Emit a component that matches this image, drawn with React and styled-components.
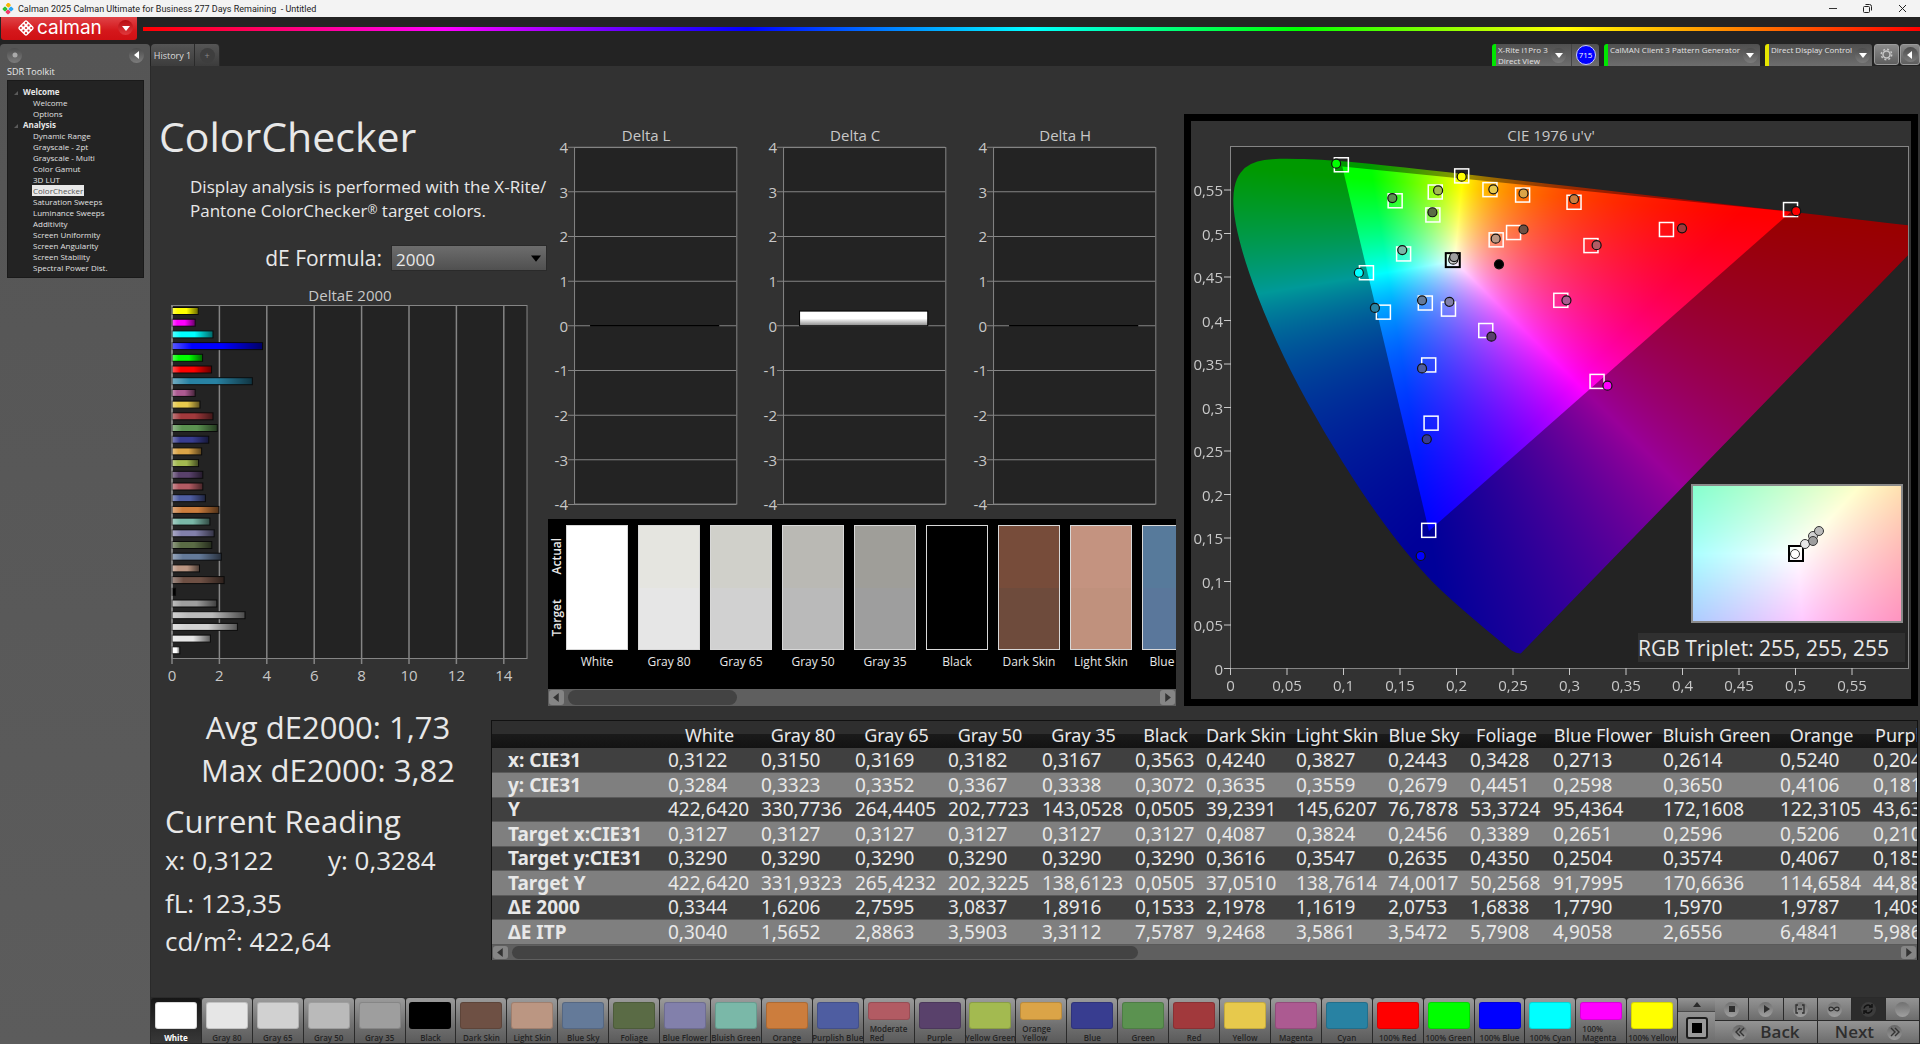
import React, { useEffect, useRef } from 'react';
import styled, { createGlobalStyle, css } from 'styled-components';

const colours = {
  page: '#323232',
  dark: '#232323',
  line: '#858585',
  text: '#e8e8e8',
  axis: '#c8c8c8',
};

const uiFont = `'Open Sans', 'Noto Sans', sans-serif`;
const tableFont = `'Noto Sans', 'Open Sans', sans-serif`;

const patches = [
  { name: 'White', colour: '#ffffff', actual: '#ffffff', dE: 0.33 },
  { name: 'Gray 80', colour: '#e6e6e6', actual: '#e5e5e0', dE: 1.62 },
  { name: 'Gray 65', colour: '#d1d1d1', actual: '#d0d0ca', dE: 2.76 },
  { name: 'Gray 50', colour: '#bababa', actual: '#bab9b4', dE: 3.08 },
  { name: 'Gray 35', colour: '#9e9e9e', actual: '#9f9e99', dE: 1.89 },
  { name: 'Black', colour: '#000000', actual: '#000000', dE: 0.15 },
  { name: 'Dark Skin', colour: '#6e5044', target: '#6e4b3c', actual: '#774c3a', dE: 2.2 },
  { name: 'Light Skin', colour: '#bb9682', target: '#c0917d', actual: '#c49380', dE: 1.16 },
  { name: 'Blue Sky', colour: '#647a99', target: '#5a779b', actual: '#577a9b', dE: 2.08 },
  { name: 'Foliage', colour: '#5a6b45', dE: 1.68 },
  { name: 'Blue Flower', colour: '#8280ab', dE: 1.78 },
  { name: 'Bluish Green', colour: '#7ab8a8', dE: 1.6 },
  { name: 'Orange', colour: '#cc7d3d', dE: 1.98 },
  { name: 'Purplish Blue', colour: '#4e5da1', dE: 1.41 },
  { name: 'Moderate Red', colour: '#b25b63', dE: 1.3, tall: true },
  { name: 'Purple', colour: '#59416b', dE: 1.3 },
  { name: 'Yellow Green', colour: '#a3ba50', dE: 1.12 },
  { name: 'Orange Yellow', colour: '#dba447', dE: 1.25, tall: true },
  { name: 'Blue', colour: '#383d90', dE: 1.55 },
  { name: 'Green', colour: '#5b9250', dE: 1.91 },
  { name: 'Red', colour: '#a1393c', dE: 1.73 },
  { name: 'Yellow', colour: '#e7c94c', dE: 1.18 },
  { name: 'Magenta', colour: '#ac5a91', dE: 0.98 },
  { name: 'Cyan', colour: '#2882a3', dE: 3.39 },
  { name: '100% Red', colour: '#ff0000', dE: 1.67 },
  { name: '100% Green', colour: '#00ff00', dE: 1.29 },
  { name: '100% Blue', colour: '#0000ff', dE: 3.82 },
  { name: '100% Cyan', colour: '#00ffff', dE: 1.73 },
  { name: '100% Magenta', colour: '#ff00ff', dE: 0.98, tall: true },
  { name: '100% Yellow', colour: '#ffff00', dE: 1.11 },
];

const tree = [
  { name: 'Welcome', items: ['Welcome', 'Options'] },
  {
    name: 'Analysis',
    items: [
      'Dynamic Range',
      'Grayscale - 2pt',
      'Grayscale - Multi',
      'Color Gamut',
      '3D LUT',
      'ColorChecker',
      'Saturation Sweeps',
      'Luminance Sweeps',
      'Additivity',
      'Screen Uniformity',
      'Screen Angularity',
      'Screen Stability',
      'Spectral Power Dist.',
    ],
  },
];

const columns = [
  { name: 'White', width: 93 },
  { name: 'Gray 80', width: 94 },
  { name: 'Gray 65', width: 93 },
  { name: 'Gray 50', width: 94 },
  { name: 'Gray 35', width: 93 },
  { name: 'Black', width: 71 },
  { name: 'Dark Skin', width: 90 },
  { name: 'Light Skin', width: 92 },
  { name: 'Blue Sky', width: 82 },
  { name: 'Foliage', width: 83 },
  { name: 'Blue Flower', width: 110 },
  { name: 'Bluish Green', width: 117 },
  { name: 'Orange', width: 93 },
  { name: 'Purplish Blue', width: 126 },
];

const rows = [
  ['x: CIE31', '0,3122 0,3150 0,3169 0,3182 0,3167 0,3563 0,4240 0,3827 0,2443 0,3428 0,2713 0,2614 0,5240 0,2048'],
  ['y: CIE31', '0,3284 0,3323 0,3352 0,3367 0,3338 0,3072 0,3635 0,3559 0,2679 0,4451 0,2598 0,3650 0,4106 0,1811'],
  ['Y', '422,6420 330,7736 264,4405 202,7723 143,0528 0,0505 39,2391 145,6207 76,7878 53,3724 95,4364 172,1608 122,3105 43,6310'],
  ['Target x:CIE31', '0,3127 0,3127 0,3127 0,3127 0,3127 0,3127 0,4087 0,3824 0,2456 0,3389 0,2651 0,2596 0,5206 0,2102'],
  ['Target y:CIE31', '0,3290 0,3290 0,3290 0,3290 0,3290 0,3290 0,3616 0,3547 0,2635 0,4350 0,2504 0,3574 0,4067 0,1852'],
  ['Target Y', '422,6420 331,9323 265,4232 202,3225 138,6123 0,0505 37,0510 138,7614 74,0017 50,2568 91,7995 170,6636 114,6584 44,8810'],
  ['ΔE 2000', '0,3344 1,6206 2,7595 3,0837 1,8916 0,1533 2,1978 1,1619 2,0753 1,6838 1,7790 1,5970 1,9787 1,4083'],
  ['ΔE ITP', '0,3040 1,5652 2,8863 3,5903 3,3112 7,5787 9,2468 3,5861 3,5472 5,7908 4,9058 2,6556 6,4841 5,9861'],
];

// spectral locus, CIE 1931 xy
const locus = [
  [0.1741, 0.005], [0.1714, 0.0051], [0.1689, 0.0069], [0.1644, 0.0109],
  [0.1566, 0.0177], [0.144, 0.0297], [0.1355, 0.0399], [0.1241, 0.0578],
  [0.1096, 0.0868], [0.0913, 0.1327], [0.0687, 0.2007], [0.0454, 0.295],
  [0.0235, 0.4127], [0.0082, 0.5384], [0.0039, 0.6548], [0.0139, 0.7502],
  [0.0389, 0.812], [0.0743, 0.8338], [0.1142, 0.8262], [0.1547, 0.8059],
  [0.2296, 0.7543], [0.3016, 0.6923], [0.3731, 0.6245], [0.4441, 0.5547],
  [0.5125, 0.4866], [0.5752, 0.4242], [0.627, 0.3725], [0.6658, 0.334],
  [0.6915, 0.3083], [0.719, 0.2809], [0.7347, 0.2653],
];

const primaries = [[0.68, 0.32], [0.265, 0.69], [0.15, 0.06]];

// u', v' of the target squares
const targets = [
  [0.0981, 0.579], [0.2046, 0.5662], [0.2296, 0.5504], [0.2585, 0.5442],
  [0.304, 0.5359], [0.1812, 0.5477], [0.1457, 0.5376], [0.1791, 0.5213],
  [0.2505, 0.5011], [0.2351, 0.4927], [0.4956, 0.5275], [0.3858, 0.5046],
  [0.319, 0.4861], [0.1532, 0.4765], [0.1203, 0.4549], [0.2923, 0.4232],
  [0.1724, 0.4201], [0.1929, 0.4131], [0.1353, 0.4096], [0.2259, 0.3885],
  [0.1754, 0.3489], [0.3244, 0.33], [0.1775, 0.282], [0.1754, 0.1588],
];

// u', v' and colour of the readings
const readings = [
  [0.0935, 0.5803, '#00ff00'], [0.2046, 0.5653, '#ffff00'], [0.2326, 0.5508, '#e7c94c'],
  [0.2593, 0.546, '#dba447'], [0.304, 0.5394, '#cc7d3d'], [0.1837, 0.5495, '#a3ba50'],
  [0.1432, 0.5407, '#5b9250'], [0.1787, 0.5244, '#5a6b45'], [0.2593, 0.5046, '#6e5044'],
  [0.2347, 0.4941, '#bb9682'], [0.5006, 0.5257, '#ff0000'], [0.3996, 0.5059, '#a1393c'],
  [0.324, 0.4866, '#b25b63'], [0.152, 0.4809, '#7ab8a8'], [0.1136, 0.4549, '#00ffff'],
  [0.1971, 0.4699, '#d1d1d1'], [0.1979, 0.4729, '#9e9e9e'], [0.2376, 0.4646, '#000000'],
  [0.2973, 0.4232, '#ac5a91'], [0.1695, 0.4232, '#647a99'], [0.1937, 0.4215, '#8280ab'],
  [0.1278, 0.4144, '#2882a3'], [0.2309, 0.3814, '#59416b'], [0.1695, 0.3449, '#4e5da1'],
  [0.3336, 0.3251, '#ff00ff'], [0.1737, 0.2635, '#383d90'], [0.1683, 0.1293, '#0000ff'],
];

const insetReadings = [
  [604, 433, '#ffffff'], [614, 423, '#e6e6e6'], [622, 415, '#d1d1d1'],
  [622, 420, '#9e9e9e'], [628, 410, '#bababa'],
];

const GlobalStyle = createGlobalStyle`
  *, *::before, *::after { box-sizing: border-box; }

  body {
    margin: 0;
    background: ${colours.page};
    color: ${colours.text};
    font-family: ${uiFont};
  }

  button, select { font-family: inherit; }
  button { padding: 0; border: 0; cursor: pointer; }
  h1, h2, p, ul { margin: 0; padding: 0; }
  ul { list-style: none; }
`;

const Page = styled.div`
  display: flex;
  flex-direction: column;
  min-height: 100vh;
  overflow: hidden;
`;

/* window frame */

const TitleBar = styled.header`
  display: flex;
  align-items: center;
  gap: 4px;
  height: 17px;
  padding-left: 2px;
  background: #f3f3f3;
  color: #222222;
  font-family: Roboto, sans-serif;
  font-size: 9px;
  white-space: pre;
`;

const WindowButtons = styled.div`
  display: flex;
  margin-left: auto;
`;

const WindowButton = styled.button`
  display: flex;
  align-items: center;
  justify-content: center;
  width: 35px;
  height: 17px;
  background: transparent;
`;

const BrandBar = styled.div`
  display: flex;
  align-items: flex-start;
  gap: 6px;
  height: 27px;
  padding-left: 1px;
  background: ${colours.dark};
`;

const BrandButton = styled.button`
  display: flex;
  flex: none;
  align-items: center;
  gap: 2px;
  width: 136px;
  height: 23px;
  padding: 0 4px 2px 16px;
  border-radius: 0 0 3px 3px;
  background: linear-gradient(#e04347, #d4171b 60%, #d01014);
  color: #ffffff;
  font-family: Inter, sans-serif;
  font-size: 19px;
  font-weight: 400;
  line-height: 20px;
`;

const Rainbow = styled.div`
  flex: 1;
  height: 4px;
  margin-top: 10px;
  background: linear-gradient(
    90deg,
    #ff0000,
    #ff00ff 17%,
    #0000ff 34%,
    #00ffff 50%,
    #00ff00 65%,
    #ffff00 80%,
    #ff0000
  );
`;

const Knob = styled.span`
  display: flex;
  flex: none;
  align-items: center;
  justify-content: center;
  width: 15px;
  height: 15px;
  margin-left: ${({ $push }) => ($push ? 'auto' : 0)};
  border-radius: 50%;
  background: ${({ $red }) =>
    $red ? 'linear-gradient(#b80d12, #e0383c)' : 'linear-gradient(#4c4c4c, #7c7c7c)'};
`;

const Columns = styled.div`
  display: flex;
  flex: 1;
  background: ${colours.dark};
`;

/* sidebar */

const Sidebar = styled.aside`
  flex: none;
  width: 150px;
  padding: 3px 6px 0 7px;
  border-radius: 4px 4px 0 0;
  background: linear-gradient(#555555, #5c5c5c);
`;

const SidebarTop = styled.div`
  display: flex;
  align-items: center;
  justify-content: space-between;
  height: 16px;
`;

const RoundButton = styled.button`
  display: flex;
  background: none;
`;

const SidebarTitle = styled.h2`
  font-size: 9px;
  font-weight: 400;
  line-height: 17px;
`;

const Tree = styled.ul`
  padding: 5px 0 4px;
  border: 1px solid #1a1a1a;
  background: ${colours.dark};
  font-size: 8px;
  line-height: 11px;
`;

const TreeGroup = styled.li`
  padding-left: 6px;
  font-weight: 700;

  svg {
    margin-right: 5px;
  }
`;

const TreeItem = styled.li`
  padding-left: 18px;
  font-weight: 400;
`;

const TreeLink = styled.a`
  display: inline-block;
  padding: 0 1px;
  color: #e0e0e0;
  text-decoration: none;

  ${({ $active }) =>
    $active &&
    css`
      background: #e8e8e8;
      color: #555555;
    `}
`;

/* tabs and devices */

const Main = styled.main`
  display: flex;
  flex: 1;
  flex-direction: column;
  min-width: 0;
`;

const TabRow = styled.div`
  display: flex;
  height: 22px;
  padding-left: 1px;
`;

const Tab = styled.button`
  width: ${({ $narrow }) => ($narrow ? 25 : 44)}px;
  border-right: 1px solid #2a2a2a;
  border-radius: ${({ $narrow }) => ($narrow ? '0 4px 0 0' : '4px 0 0 0')};
  background: linear-gradient(#555555, #3c3c3c);
  color: #dddddd;
  font-size: 9px;

  ${Knob} {
    margin: 0 auto;
    background: #3e3e3e;
    color: #888888;
  }
`;

const Devices = styled.div`
  display: flex;
  gap: 5px;
  margin-left: auto;
`;

const Device = styled.div`
  display: flex;
  align-items: flex-start;
  width: ${({ $width }) => $width}px;
  padding: 0 0 0 2px;
  border-left: 4px solid ${({ $light }) => $light};
  border-radius: 3px 3px 0 0;
  background: linear-gradient(#505050, #6d6d6d);
  color: #e4e4e4;
  font-size: 8px;
  line-height: 11px;
`;

const DeviceButton = styled.button`
  display: flex;
  flex: 1;
  gap: 3px;
  height: 22px;
  padding-right: 5px;
  background: none;
  color: inherit;
  font-size: inherit;
  line-height: inherit;
  text-align: left;
  white-space: nowrap;

  ${Knob} {
    align-self: center;
  }
`;

const Meter = styled.span`
  display: flex;
  align-items: center;
  justify-content: center;
  width: 28px;
  height: 22px;
  border-left: 1px solid #444444;

  span {
    width: 20px;
    height: 20px;
    border: 1px solid #c8c8ff;
    border-radius: 50%;
    background: #0000ff;
    color: #ffffff;
    line-height: 18px;
    text-align: center;
  }
`;

const ToolButtons = styled.div`
  display: flex;
  gap: 1px;
  margin-left: -3px;
`;

const ToolButton = styled.button`
  display: flex;
  align-items: center;
  justify-content: center;
  width: ${({ $width }) => $width}px;
  height: 21px;
  border: 1px solid #9a9a9a;
  border-radius: 3px;
  background: linear-gradient(#8a8a8a, #5e5e5e);
`;

/* workspace */

const Workspace = styled.div`
  flex: 1;
  border-left: 1px solid #2a2a2a;
  background: ${colours.page};
`;

const Upper = styled.div`
  display: grid;
  grid-template-columns: minmax(0, 397fr) minmax(0, 628fr) minmax(0, 744fr);
  align-items: start;
`;

const Intro = styled.section`
  padding-top: 46px;
`;

const Title = styled.h1`
  padding-left: 8px;
  font-size: 41px;
  font-weight: 400;
  line-height: 48px;
`;

const Description = styled.p`
  margin: 15px 0 22px;
  padding-left: 39px;
  font-size: 17px;
  line-height: 24px;
  white-space: nowrap;

  sup {
    font-size: 12px;
    line-height: 0;
    vertical-align: 3px;
  }
`;

const Formula = styled.div`
  display: flex;
  align-items: center;
  justify-content: flex-end;
  gap: 9px;
  padding-right: 1px;

  label {
    font-size: 21px;
    line-height: 26px;
  }
`;

const SelectBox = styled.span`
  display: grid;
  align-items: center;
  width: 156px;

  select,
  svg {
    grid-area: 1 / 1;
  }

  svg {
    margin-right: 6px;
    justify-self: end;
    pointer-events: none;
  }
`;

const Select = styled.select`
  width: 100%;
  height: 26px;
  padding: 2px 4px 0;
  border: 1px solid #2a2a2a;
  background: linear-gradient(#6d6d6d, #505050);
  color: ${colours.text};
  font-size: 17px;
  appearance: none;
`;

const Chart = styled.svg`
  display: block;
  width: 100%;
  height: auto;
  margin-top: ${({ $top = 0 }) => $top}px;
  fill: ${colours.axis};
  font-family: ${uiFont};
  font-size: 15px;
`;

const Deltas = styled.section`
  padding-top: 54px;
`;

const DeltaRow = styled.div`
  display: grid;
  grid-template-columns: repeat(3, 1fr);
`;

const Strip = styled.div`
  display: flex;
  gap: 10px;
  height: 170px;
  padding: 6px 0 0 3px;
  overflow: hidden;
  background: #000000;
`;

const StripSides = styled.div`
  display: flex;
  flex: none;
  flex-direction: column;
  width: 15px;
  height: 125px;
  margin-right: -10px;
  font-size: 12px;
  font-weight: 600;
  line-height: 12px;

  span {
    flex: 1;
    align-self: flex-start;
    text-align: center;
    writing-mode: vertical-rl;
    transform: rotate(180deg);
  }
`;

const StripPatch = styled.div`
  flex: none;
  width: 62px;
  font-size: 12px;
  font-weight: 500;
  line-height: 23px;
  text-align: center;
  white-space: nowrap;
`;

const StripSwatch = styled.div`
  height: 125px;
  border: 1px solid #d8d8d8;
  background: linear-gradient(
    ${({ $actual, $target }) => `${$actual} 50%, ${$target} 50%`}
  );
`;

const ScrollTrack = styled.div`
  display: flex;
  align-items: center;
  gap: 4px;
  height: ${({ $height }) => $height}px;
  padding: 1px;
  background: #5f5f5f;
`;

const ScrollButton = styled.button`
  display: flex;
  align-items: center;
  justify-content: center;
  width: 15px;
  height: 100%;
  margin-left: ${({ $end }) => ($end ? 'auto' : 0)};
  border-radius: 3px;
  background: #858585;
`;

const ScrollThumb = styled.div`
  width: ${({ $width }) => $width};
  height: 100%;
  border-radius: 8px;
  background: #434343;
`;

const CiePanel = styled.section`
  margin: 48px 2px 0 8px;
  border: 7px solid #000000;
  background: ${colours.page};
`;

const Locus = styled.canvas`
  display: block;
  width: 100%;
  height: 100%;
`;

const Lower = styled.div`
  display: grid;
  grid-template-columns: minmax(0, 340fr) minmax(0, 1429fr);
  align-items: start;
`;

const Summary = styled.section`
  padding-left: 14px;
`;

const Average = styled.p`
  font-size: 31px;
  line-height: 43px;
  text-align: center;
`;

const ReadingTitle = styled.h2`
  margin-top: 10px;
  font-size: 31px;
  font-weight: 400;
  line-height: 39px;
`;

const Reading = styled.p`
  display: flex;
  font-size: 26px;
  line-height: 38px;

  span {
    width: 168px;
  }

  span + span {
    margin-bottom: 5px;
  }
`;

const TablePanel = styled.section`
  min-width: 0;
  margin: 14px 2px 0 0;
  overflow: hidden;
  border: solid #111111;
  border-width: 1px 1px 0;
`;

const Table = styled.table`
  width: 1502px;
  border-collapse: collapse;
  table-layout: fixed;
  font-family: ${tableFont};
  font-size: 19px;
  white-space: nowrap;

  th,
  td {
    padding: 0 0 0 5px;
    overflow: hidden;
    font-weight: 400;
    line-height: 22px;
    text-align: left;
  }

  thead tr {
    height: 27px;
    background: linear-gradient(#2e2e2e 50%, #1a1a1a 50%, #131313);
  }

  thead th {
    padding: 0;
    font-size: 18px;
    text-align: center;
  }

  tbody th {
    padding-left: 16px;
    font-weight: 700;
  }

  tbody tr {
    height: 24px;
    background: #404040;
  }

  tbody tr:nth-child(even) {
    height: 25px;
    border: solid #5a5a5a;
    border-width: 1px 0;
    background: #7f7f7f;
  }
`;

/* bottom bar */

const BottomBar = styled.footer`
  display: flex;
  height: 47px;
  padding: 1px;
  background: #2a2a2a;
`;

const PatchButton = styled.button`
  display: flex;
  flex: 1;
  flex-direction: column;
  align-items: center;
  width: 0;
  height: 45px;
  margin-right: 1px;
  padding-top: 4px;
  border-radius: 3px 3px 0 0;
  background: linear-gradient(#9b9b9b, #707070 60%, #5a5a5a);
  color: #242424;
  font-size: 8px;
  font-weight: 600;
  line-height: 9px;
  white-space: nowrap;

  ${({ $active }) =>
    $active &&
    css`
      background: linear-gradient(#161616, #383838);
      color: #ffffff;
      font-weight: 700;
    `}
`;

const PatchSwatch = styled.span`
  flex: none;
  width: 42px;
  height: ${({ $tall }) => ($tall ? 18 : 27)}px;
  margin-bottom: 4px;
  border: 1px solid rgba(0, 0, 0, 0.15);
  border-radius: 3px;
  background: ${({ $colour }) => $colour};
`;

const PatchName = styled.span`
  width: ${({ $tall }) => ($tall ? '38px' : 'auto')};
  text-align: left;
  white-space: ${({ $tall }) => ($tall ? 'normal' : 'nowrap')};
`;

const PatternControls = styled.div`
  display: flex;
  flex: none;
  flex-direction: column;
  width: 37px;
`;

const barButton = css`
  display: flex;
  align-items: center;
  justify-content: center;
  background: linear-gradient(#949494, #6c6c6c);
  color: #2e2e2e;
`;

const ExpandButton = styled.button`
  ${barButton}
  height: 14px;
  border-bottom: 1px solid #4a4a4a;
`;

const PatternButton = styled.button`
  ${barButton}
  height: 31px;
`;

const Transport = styled.div`
  display: grid;
  flex: none;
  grid-template-columns: repeat(6, 1fr);
  grid-template-rows: 22px 22px;
  gap: 1px;
  width: 204px;
`;

const TransportButton = styled.button`
  ${barButton}
  ${({ $pressed }) =>
    $pressed &&
    css`
      background: #2c2c2c;
    `}

  ${Knob} {
    background: ${({ $pressed }) => ($pressed ? '#3c3c3c' : 'linear-gradient(#707070, #a0a0a0)')};
  }
`;

const StepButton = styled.button`
  ${barButton}
  grid-column: span 3;
  gap: 13px;
  font-size: 17px;
  font-weight: 600;
  line-height: 22px;

  ${Knob} {
    background: linear-gradient(#666666, #9a9a9a);
  }
`;

const Arrow = ({ dir, size = 8, colour = '#ffffff' }) => {
  const points = {
    down: '0,2 8,2 4,7',
    up: '0,6 8,6 4,1',
    left: '6,0 6,8 1,4',
    right: '2,0 2,8 7,4',
  };
  return (
    <svg width={size} height={size} viewBox="0 0 8 8" aria-hidden="true">
      <polygon points={points[dir]} fill={colour} />
    </svg>
  );
};

const AppIcon = () => (
  <svg width="12" height="12" viewBox="0 0 12 12" aria-hidden="true">
    <rect x="4" y="0" width="4" height="4" rx="1" fill="#f7b500" transform="rotate(45 6 2.5)" />
    <rect x="1" y="4" width="4" height="4" rx="1" fill="#2bc234" transform="rotate(45 3 6)" />
    <rect x="7" y="4" width="4" height="4" rx="1" fill="#2aa8f2" transform="rotate(45 9 6)" />
    <rect x="4" y="7" width="4" height="4" rx="1" fill="#f03a6a" transform="rotate(45 6 9)" />
  </svg>
);

const CalmanLogo = () => (
  <svg width="18" height="18" viewBox="0 0 18 18" aria-hidden="true">
    <rect x="3" y="3" width="12" height="12" rx="2" fill="#ffffff" transform="rotate(45 9 9)" />
    {[0, 1, 2].map((row) =>
      [0, 1, 2].map((col) => (
        <circle
          key={`${row}${col}`}
          cx={9 + (col - row) * 2.6}
          cy={3.8 + (col + row) * 2.6}
          r="1.1"
          fill="#d8282c"
        />
      ))
    )}
  </svg>
);

const ScrollBar = ({ height, thumb, label }) => (
  <ScrollTrack $height={height}>
    <ScrollButton aria-label={`Scroll ${label} left`}>
      <Arrow dir="left" colour="#333333" size={9} />
    </ScrollButton>
    <ScrollThumb $width={thumb} />
    <ScrollButton $end aria-label={`Scroll ${label} right`}>
      <Arrow dir="right" colour="#333333" size={9} />
    </ScrollButton>
  </ScrollTrack>
);

const DeltaEChart = () => {
  const unit = 23.7;
  const bars = [...patches].reverse();
  return (
    <Chart $top={9} viewBox="0 0 397 410" role="img" aria-label="DeltaE 2000">
      <defs>
        <linearGradient id="shine">
          <stop offset="0" stopColor="#fff" stopOpacity="0.35" />
          <stop offset="0.22" stopColor="#fff" stopOpacity="0" />
          <stop offset="0.55" stopColor="#000" stopOpacity="0" />
          <stop offset="1" stopColor="#000" stopOpacity="0.6" />
        </linearGradient>
      </defs>
      <text x="199" y="21" textAnchor="middle">DeltaE 2000</text>
      <rect x="21" y="25.5" width="355" height="353" fill={colours.dark} stroke={colours.line} />
      {[0, 2, 4, 6, 8, 10, 12, 14].map((n) => (
        <g key={n}>
          <path d={`M${21 + n * unit} 25V384`} stroke={colours.line} strokeWidth="1.5" />
          <text x={21 + n * unit} y="401" textAnchor="middle">{n}</text>
        </g>
      ))}
      {bars.map(({ name, colour, dE }, i) => {
        const box = { x: 21, y: 27.5 + i * 11.7, width: dE * unit, height: 7 };
        return (
          <g key={name}>
            <rect {...box} fill={colour} />
            <rect {...box} fill="url(#shine)" stroke="#0a0a0a" />
          </g>
        );
      })}
      <path d="M21 25V378" stroke={colours.line} />
    </Chart>
  );
};

const DeltaChart = ({ title, value }) => {
  const step = 44.6;
  const zero = 205.5;
  return (
    <Chart viewBox="0 0 209 398" role="img" aria-label={title}>
      <defs>
        <linearGradient id="white-bar" x2="0" y2="1">
          <stop offset="0.5" stopColor="#fff" />
          <stop offset="1" stopColor="#888" />
        </linearGradient>
      </defs>
      <text x="98" y="21" textAnchor="middle">{title}</text>
      <rect x="26.5" y="27.5" width="162" height="356" fill={colours.dark} stroke={colours.line} />
      {[4, 3, 2, 1, 0, -1, -2, -3, -4].map((n) => (
        <g key={n}>
          <path d={`M20 ${zero - n * step}H188`} stroke={colours.line} />
          <text x="20" y={zero - n * step + 6} textAnchor="end">{n}</text>
        </g>
      ))}
      {value ? (
        <rect
          x="42.5"
          y={zero - value * step}
          width="128"
          height={value * step}
          fill="url(#white-bar)"
          stroke="#000"
        />
      ) : (
        <path d={`M42 ${zero}H171`} stroke="#000" strokeWidth="1.5" />
      )}
    </Chart>
  );
};

const toUv = ([x, y]) => {
  const d = -2 * x + 12 * y + 3;
  return [(4 * x) / d, (9 * y) / d];
};

const toRgb = (x, y, level) => {
  const X = x / y;
  const Z = (1 - x - y) / y;
  const rgb = [
    3.2406 * X - 1.5372 - 0.4986 * Z,
    -0.9689 * X + 1.8758 + 0.0415 * Z,
    0.0557 * X - 0.204 + 1.057 * Z,
  ].map((c) => Math.max(c, 0));
  const top = Math.max(...rgb) || 1;
  return rgb.map((c) => (c / top) * 255 * level);
};

const paint = (width, height, colourAt) => {
  const canvas = document.createElement('canvas');
  canvas.width = width;
  canvas.height = height;
  const ctx = canvas.getContext('2d');
  const image = ctx.createImageData(width, height);
  for (let py = 0; py < height; py += 1) {
    for (let px = 0; px < width; px += 1) {
      image.data.set([...colourAt(px / width, 1 - (py + 0.5) / height), 255], (py * width + px) * 4);
    }
  }
  ctx.putImageData(image, 0, 0);
  return canvas;
};

const GamutCanvas = ({ width, height }) => {
  const ref = useRef(null);

  useEffect(() => {
    const ctx = ref.current.getContext('2d');
    const place = (xy) => {
      const [u, v] = toUv(xy);
      return [(u / 0.6) * width, height - (v / 0.6) * height];
    };
    const uvColour = (level) => (h, k) => {
      const u = h * 0.6;
      const v = k * 0.6;
      const d = 6 * u - 16 * v + 12;
      return toRgb((9 * u) / d, (4 * v) / d, level);
    };

    ctx.clearRect(0, 0, width, height);
    const edge = locus.map(place);
    ctx.save();
    ctx.beginPath();
    ctx.moveTo(...edge[0]);
    edge.slice(1, -1).forEach(([x, y], i) => {
      const [nx, ny] = edge[i + 2];
      ctx.quadraticCurveTo(x, y, (x + nx) / 2, (y + ny) / 2);
    });
    ctx.lineTo(...edge[edge.length - 1]);
    ctx.closePath();
    ctx.clip();
    ctx.drawImage(paint(width, height, uvColour(0.6)), 0, 0);
    ctx.restore();

    ctx.beginPath();
    primaries.map(place).forEach((point) => ctx.lineTo(...point));
    ctx.closePath();
    ctx.clip();
    ctx.drawImage(paint(width, height, uvColour(1)), 0, 0);
  }, [width, height]);

  return <Locus ref={ref} width={width} height={height} />;
};

const WhiteCanvas = ({ width, height }) => {
  const ref = useRef(null);

  useEffect(() => {
    const near = paint(width, height, (h, k) =>
      toRgb(0.3127 + (h - 0.5) * 0.05, 0.329 + (k - 0.5) * 0.05, 1)
    );
    ref.current.getContext('2d').drawImage(near, 0, 0);
  }, [width, height]);

  return <Locus ref={ref} width={width} height={height} />;
};

const CieChart = () => {
  const left = 39.5;
  const bottom = 547.5;
  const px = (u) => left + (u * 678) / 0.6;
  const py = (v) => bottom - (v * 522) / 0.6;
  const ticks = [0, 0.05, 0.1, 0.15, 0.2, 0.25, 0.3, 0.35, 0.4, 0.45, 0.5, 0.55];
  const label = (n) => String(n).replace('.', ',');

  return (
    <Chart viewBox="0 0 720 578" role="img" aria-label="CIE 1976 u'v' chromaticity">
      <text x="360" y="20" textAnchor="middle">CIE 1976 u'v'</text>
      <rect x="39.5" y="25.5" width="678" height="522" fill={colours.dark} stroke={colours.line} />
      <foreignObject x="40" y="26" width="677" height="521">
        <GamutCanvas width={677} height={521} />
      </foreignObject>
      {ticks.map((n) => (
        <g key={n}>
          <path d={`M33 ${py(n)}h7M${px(n)} 547v7`} stroke={colours.axis} />
          <text x="32" y={py(n) + 6} textAnchor="end">{label(n)}</text>
          <text x={px(n)} y="570" textAnchor="middle">{label(n)}</text>
        </g>
      ))}
      {targets.map(([u, v]) => (
        <rect
          key={`${u}-${v}`}
          x={px(u) - 7}
          y={py(v) - 7}
          width="14"
          height="14"
          fill="none"
          stroke="#ffffff"
          strokeWidth="1.5"
        />
      ))}
      <rect x={px(0.1967) - 7} y={py(0.4694) - 7} width="14" height="14" fill="none" stroke="#000" strokeWidth="2" />
      {readings.map(([u, v, colour]) => (
        <circle key={`${u}-${v}`} cx={px(u)} cy={py(v)} r="4.5" fill={colour} stroke="#111" strokeWidth="1.2" />
      ))}
      <foreignObject x="501" y="364" width="210" height="137">
        <WhiteCanvas width={210} height={137} />
      </foreignObject>
      <rect x="501" y="364" width="210" height="137" fill="none" stroke="#8a8a8a" strokeWidth="2" />
      <rect x="598" y="425" width="14" height="15" fill="none" stroke="#000" strokeWidth="2" />
      {insetReadings.map(([cx, cy, colour]) => (
        <circle key={`${cx}-${cy}`} cx={cx} cy={cy} r="4.5" fill={colour} stroke="#333" />
      ))}
      <rect x="447" y="512" width="267" height="29" fill="#303030" />
      <text x="447" y="535" fontSize="21" fill={colours.text}>RGB Triplet: 255, 255, 255</text>
    </Chart>
  );
};

const DataTable = () => (
  <TablePanel>
    <Table>
      <colgroup>
        <col width="171" />
        {columns.map(({ name, width }) => (
          <col key={name} width={width} />
        ))}
      </colgroup>
      <thead>
        <tr>
          <th aria-label="Measurement" />
          {columns.map(({ name }) => (
            <th key={name} scope="col">{name}</th>
          ))}
        </tr>
      </thead>
      <tbody>
        {rows.map(([name, values]) => (
          <tr key={name}>
            <th scope="row">{name}</th>
            {values.split(' ').map((value, i) => (
              <td key={columns[i].name}>{value}</td>
            ))}
          </tr>
        ))}
      </tbody>
    </Table>
    <ScrollBar height={15} thumb="44%" label="table" />
  </TablePanel>
);

const transport = [
  { name: 'Stop', icon: <rect x="3" y="3" width="6" height="6" fill="currentColor" /> },
  { name: 'Play', icon: <polygon points="4,2 10,6 4,10" fill="currentColor" /> },
  {
    name: 'Read series',
    icon: <path d="M4 2H2v8h2M8 2h2v8H8M4 6h4" fill="none" stroke="currentColor" strokeWidth="1.3" />,
  },
  {
    name: 'Read continuously',
    icon: (
      <path
        d="M6 6C4.500 3.500 1 3.500 1 6s3.500 2.500 5 0 5-2.500 5 0-3.500 2.500-5 0"
        fill="none"
        stroke="currentColor"
        strokeWidth="1.2"
      />
    ),
  },
  {
    name: 'Auto repeat',
    pressed: true,
    icon: (
      <g fill="none" stroke="#101010" strokeWidth="1.5">
        <path d="M2 5.500a4 4 0 0 1 7-2M10 6.500a4 4 0 0 1-7 2" />
        <path d="M10 1v3H7M2 11V8h3" />
      </g>
    ),
  },
  { name: 'Record', icon: null },
];

const Chevrons = ({ flip }) => (
  <svg width="10" height="10" viewBox="0 0 10 10" aria-hidden="true">
    <path
      d={flip ? 'M1 1l4 4-4 4M5 1l4 4-4 4' : 'M5 1L1 5l4 4M9 1L5 5l4 4'}
      fill="none"
      stroke="#333333"
      strokeWidth="1.4"
    />
  </svg>
);

const App = () => (
  <Page>
    <GlobalStyle />
    <TitleBar>
      <AppIcon />
      <span>Calman 2025 Calman Ultimate for Business 277 Days Remaining  - Untitled</span>
      <WindowButtons>
        <WindowButton aria-label="Minimize">
          <svg width="9" height="9"><path d="M1 4.500h8" stroke="#333" /></svg>
        </WindowButton>
        <WindowButton aria-label="Restore">
          <svg width="9" height="9" fill="none" stroke="#222">
            <rect x="0.500" y="2.500" width="6" height="6" rx="1" />
            <path d="M2.500 0.500h4a2 2 0 0 1 2 2v4" />
          </svg>
        </WindowButton>
        <WindowButton aria-label="Close">
          <svg width="9" height="9"><path d="M1 1l7 7M8 1l-7 7" stroke="#222" /></svg>
        </WindowButton>
      </WindowButtons>
    </TitleBar>

    <BrandBar>
      <BrandButton>
        <CalmanLogo />
        calman
        <Knob $red $push>
          <Arrow dir="down" />
        </Knob>
      </BrandButton>
      <Rainbow />
    </BrandBar>

    <Columns>
      <Sidebar>
        <SidebarTop>
          <RoundButton aria-label="Options">
            <Knob>
              <svg width="6" height="6"><circle cx="3" cy="3" r="2.500" fill="#aaaaaa" /></svg>
            </Knob>
          </RoundButton>
          <RoundButton aria-label="Collapse sidebar">
            <Knob>
              <Arrow dir="left" />
            </Knob>
          </RoundButton>
        </SidebarTop>
        <SidebarTitle>SDR Toolkit</SidebarTitle>
        <Tree>
          {tree.map(({ name, items }) => (
            <TreeGroup key={name}>
              <svg width="4" height="4" aria-hidden="true">
                <polygon points="4,0 4,4 0,4" fill="#5a5a5a" />
              </svg>
              {name}
              <ul>
                {items.map((item) => (
                  <TreeItem key={item}>
                    <TreeLink href="#" $active={item === 'ColorChecker'}>{item}</TreeLink>
                  </TreeItem>
                ))}
              </ul>
            </TreeGroup>
          ))}
        </Tree>
      </Sidebar>

      <Main>
        <TabRow>
          <Tab>History 1</Tab>
          <Tab $narrow aria-label="New history">
            <Knob>+</Knob>
          </Tab>
          <Devices>
            <Device $light="#00e600" $width={107}>
              <DeviceButton>
                <span>X-Rite i1Pro 3<br />Direct View</span>
                <Knob $push><Arrow dir="down" /></Knob>
              </DeviceButton>
              <Meter><span>715</span></Meter>
            </Device>
            <Device $light="#00e600" $width={156}>
              <DeviceButton>
                <span>CalMAN Client 3 Pattern Generator</span>
                <Knob $push><Arrow dir="down" /></Knob>
              </DeviceButton>
            </Device>
            <Device $light="#e6e600" $width={107}>
              <DeviceButton>
                <span>Direct Display Control</span>
                <Knob $push><Arrow dir="down" /></Knob>
              </DeviceButton>
            </Device>
            <ToolButtons>
              <ToolButton $width={25} aria-label="Settings">
                <svg width="13" height="13" viewBox="0 0 13 13" fill="none" stroke="#c8c8c8">
                  <circle cx="6.500" cy="6.500" r="3.500" strokeWidth="1.500" />
                  <circle cx="6.500" cy="6.500" r="5.200" strokeWidth="1.500" strokeDasharray="2 2.080" />
                </svg>
              </ToolButton>
              <ToolButton $width={20} aria-label="Collapse devices">
                <Knob><Arrow dir="left" /></Knob>
              </ToolButton>
            </ToolButtons>
          </Devices>
        </TabRow>

        <Workspace>
          <Upper>
            <Intro>
              <Title>ColorChecker</Title>
              <Description>
                Display analysis is performed with the X-Rite/
                <br />
                Pantone ColorChecker<sup>®</sup> target colors.
              </Description>
              <Formula>
                <label htmlFor="formula">dE Formula:</label>
                <SelectBox>
                  <Select id="formula" defaultValue="2000">
                    <option>2000</option>
                    <option>ITP</option>
                  </Select>
                  <Arrow dir="down" size={10} colour="#000000" />
                </SelectBox>
              </Formula>
              <DeltaEChart />
            </Intro>

            <Deltas>
              <DeltaRow>
                <DeltaChart title="Delta L" value={0} />
                <DeltaChart title="Delta C" value={0.33} />
                <DeltaChart title="Delta H" value={0} />
              </DeltaRow>
              <Strip>
                <StripSides>
                  <span>Actual</span>
                  <span>Target</span>
                </StripSides>
                {patches.slice(0, 9).map(({ name, colour, target = colour, actual }) => (
                  <StripPatch key={name}>
                    <StripSwatch $actual={actual} $target={target} />
                    {name}
                  </StripPatch>
                ))}
              </Strip>
              <ScrollBar height={17} thumb="27%" label="patches" />
            </Deltas>

            <CiePanel>
              <CieChart />
            </CiePanel>
          </Upper>

          <Lower>
            <Summary>
              <Average>Avg dE2000: 1,73</Average>
              <Average>Max dE2000: 3,82</Average>
              <ReadingTitle>Current Reading</ReadingTitle>
              <Reading>
                <span>x: 0,3122</span>
                <span>y: 0,3284</span>
              </Reading>
              <Reading>fL: 123,35</Reading>
              <Reading>cd/m²: 422,64</Reading>
            </Summary>
            <DataTable />
          </Lower>
        </Workspace>

        <BottomBar>
          {patches.map(({ name, colour, tall }, i) => (
            <PatchButton key={name} $active={i === 0}>
              <PatchSwatch $colour={colour} $tall={tall} />
              <PatchName $tall={tall}>{name}</PatchName>
            </PatchButton>
          ))}
          <PatternControls>
            <ExpandButton aria-label="Show all patches">
              <Arrow dir="up" colour="#2a2a2a" />
            </ExpandButton>
            <PatternButton aria-label="Pattern window">
              <svg width="22" height="22" viewBox="0 0 22 22">
                <rect x="1" y="1" width="20" height="20" rx="2" fill="#999" stroke="#1c1c1c" strokeWidth="2" />
                <rect x="6" y="6" width="10" height="10" fill="#000" />
              </svg>
            </PatternButton>
          </PatternControls>
          <Transport>
            {transport.map(({ name, icon, pressed }) => (
              <TransportButton key={name} $pressed={pressed} aria-label={name}>
                <Knob>
                  <svg width="12" height="12" viewBox="0 0 12 12">{icon}</svg>
                </Knob>
              </TransportButton>
            ))}
            <StepButton>
              <Knob><Chevrons /></Knob>
              Back
            </StepButton>
            <StepButton>
              Next
              <Knob><Chevrons flip /></Knob>
            </StepButton>
          </Transport>
        </BottomBar>
      </Main>
    </Columns>
  </Page>
);

export default App;
